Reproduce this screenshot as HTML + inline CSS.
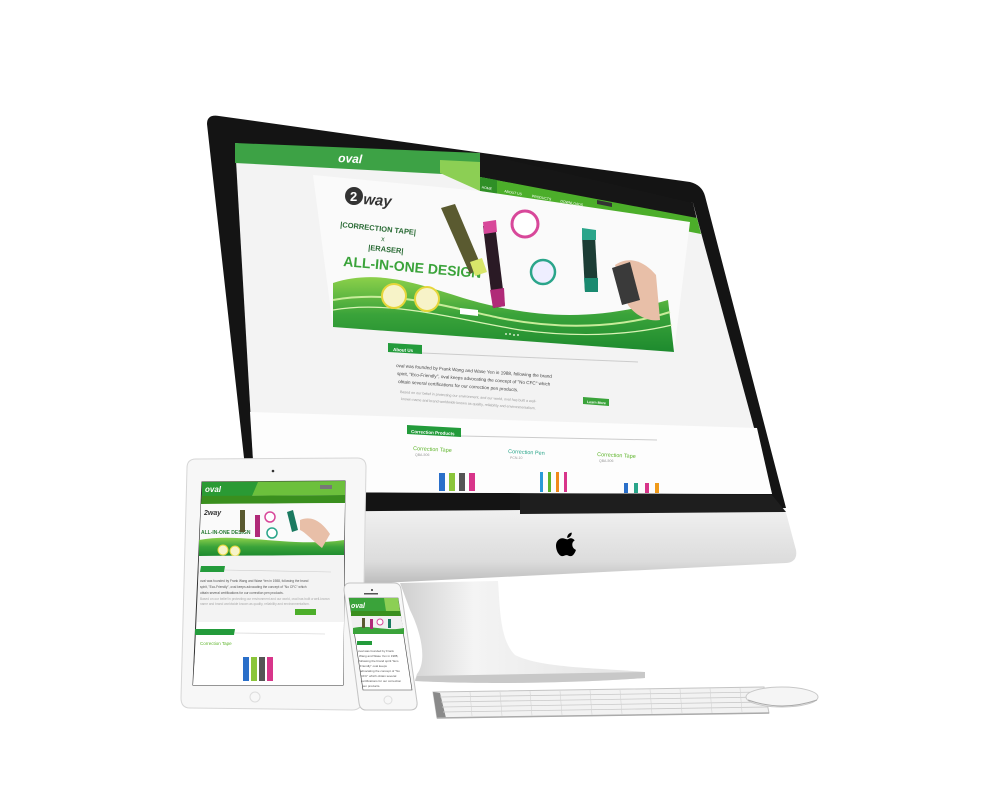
<!DOCTYPE html>
<html><head><meta charset="utf-8"><style>
html,body{margin:0;padding:0;background:#fff;width:1000px;height:800px;overflow:hidden}
svg{display:block}
text{font-family:"Liberation Sans",sans-serif}
</style></head><body>
<svg width="1000" height="800" viewBox="0 0 1000 800" xmlns="http://www.w3.org/2000/svg">
<defs>
<linearGradient id="chin" x1="0" y1="0" x2="0" y2="1"><stop offset="0" stop-color="#f2f2f2"/><stop offset="0.7" stop-color="#dcdcdc"/><stop offset="1" stop-color="#b8b8b8"/></linearGradient>
<linearGradient id="stand" x1="0" y1="0" x2="1" y2="0"><stop offset="0" stop-color="#cfcfcf"/><stop offset="0.3" stop-color="#f4f4f4"/><stop offset="1" stop-color="#e2e2e2"/></linearGradient>
<linearGradient id="grn" x1="0" y1="0" x2="0" y2="1"><stop offset="0" stop-color="#8cd04a"/><stop offset="0.5" stop-color="#3aa33a"/><stop offset="1" stop-color="#1d8a2e"/></linearGradient>
</defs>

<path d="M400,583 L498,581 C500,610 500,640 515,655 C540,668 600,668 645,672 L645,678 C560,684 470,684 415,680 L417,674 C428,660 420,630 410,610 Z" fill="url(#stand)"/>
<path d="M417,676 L645,672 L645,678 C560,684 470,684 415,681 Z" fill="#c8c8c8"/>
<path d="M250,505 L784,505 L796,550 Q798,562 786,563 L360,584 L255,586 Z" fill="url(#chin)"/>
<path d="M207,124 Q207,114 219,116 L690,182 Q702,185 705,196 L786,508 L250,512 Z" fill="#141414"/>
<path d="M520,493 L772,495 L786,512 L520,514 Z" fill="#1e1e1e"/>
<g transform="translate(556,532) scale(1.05)" fill="#000">
<path d="M11,7 C9,7 8,6 6,6 C3,6 0,9 0,13 C0,18 3,23 6,23 C7.5,23 8.5,22 10,22 C11.5,22 12,23 14,23 C16.5,23 18.5,19 19,17 C17,16 15.5,14.5 15.5,12 C15.5,10 16.5,8.8 17.8,8 C16.5,6.2 14.6,6 13.8,6 C12.5,6 11.8,7 11,7 Z"/>
<path d="M10.6,5.6 C10.5,3 12.5,0.8 15,0.6 C15.2,3.2 13,5.6 10.6,5.6 Z"/>
</g>

<polygon points="235,143 693,203 772,494 255,492" fill="#f3f3f3"/>
<polygon points="250,412 757,428 772,494 255,492" fill="#fdfdfd"/>
<polygon points="235,143 480,153 480,176 235,163" fill="#3da245"/>
<polygon points="440,160 480,162 480,191 440,173" fill="#8ccf54"/>
<polygon points="480,153 693,203 697,220 480,177" fill="#161616"/>
<polygon points="480,177 697,218 701,234 480,191" fill="#4cae2a"/>
<polygon points="480,177 497,180 497,194 480,191" fill="#2f8f26"/>
<text x="338" y="162" transform="rotate(3 338 162)" font-size="12" font-weight="bold" fill="#fff" font-style="italic">oval</text>
<g font-size="3.5" fill="#fff" transform="rotate(10 480 185)">
<text x="482" y="188">HOME</text><text x="505" y="188">ABOUT US</text><text x="533" y="188">PRODUCTS</text><text x="562" y="188">DOWNLOADS</text>
</g>
<polygon points="597,200 612,203 612,207 597,204" fill="#333"/>
<polygon points="313,175 480,191 690,222 674,352 333,327" fill="#fafafa"/>
<path d="M333,283 C380,268 420,285 470,300 C540,320 600,320 668,300 L674,352 L333,327 Z" fill="url(#grn)"/>
<path d="M333,300 C390,290 440,305 500,318 C560,330 620,328 670,312" stroke="#c8ec9a" stroke-width="2" fill="none"/>
<path d="M333,310 C390,300 450,318 520,330 C580,338 630,335 672,325" stroke="#d9f3b5" stroke-width="1.2" fill="none"/>
<circle cx="354" cy="196" r="9" fill="#333"/>
<text x="350" y="201" font-size="13" font-weight="bold" fill="#fff">2</text>
<text x="363" y="204" transform="rotate(5 363 204)" font-size="15" font-weight="bold" fill="#333" font-family="Liberation Serif" font-style="italic">way</text>
<text x="340" y="227" transform="rotate(6 340 227)" font-size="7.5" fill="#2a6b35" font-family="Liberation Mono" font-weight="bold">|CORRECTION TAPE|</text>
<text x="381" y="241" transform="rotate(6 381 241)" font-size="7" fill="#2a6b35">x</text>
<text x="368" y="250" transform="rotate(6 368 250)" font-size="7.5" fill="#2a6b35" font-family="Liberation Mono" font-weight="bold">|ERASER|</text>
<text x="343" y="266" transform="rotate(5 343 266)" font-size="14" font-weight="bold" fill="#3aa33a">ALL-IN-ONE DESIGN</text>
<circle cx="394" cy="296" r="12" fill="#f7f3c8" stroke="#e6d63a" stroke-width="2"/>
<circle cx="427" cy="299" r="12" fill="#f7f3c8" stroke="#e6d63a" stroke-width="2"/>
<polygon points="460,308 478,310 478,316 460,314" fill="#fff"/>
<polygon points="441,208 455,204 482,268 470,274" fill="#5a5a30"/>
<polygon points="470,262 482,258 487,272 475,276" fill="#d8e66a"/>
<polygon points="483,226 495,224 505,306 493,308" fill="#2a1a25"/>
<polygon points="483,222 496,220 497,232 484,234" fill="#d8489a"/>
<polygon points="490,290 504,288 505,306 493,308" fill="#b02a78"/>
<circle cx="525" cy="224" r="13" fill="#fff" stroke="#d8489a" stroke-width="3"/>
<circle cx="543" cy="272" r="12" fill="#eef" stroke="#2aa58a" stroke-width="2.5"/>
<polygon points="582,236 595,236 598,290 585,292" fill="#1c3d35"/>
<polygon points="582,228 596,230 596,240 582,240" fill="#2aa58a"/>
<polygon points="584,278 598,278 598,292 585,292" fill="#1a8a70"/>
<path d="M615,265 C630,255 645,262 656,275 L660,320 C648,322 635,315 628,305 Z" fill="#e8bfa8"/>
<polygon points="612,268 630,262 640,300 622,305" fill="#3a3a3a"/>
<g fill="#cfe9c6"><circle cx="506" cy="334" r="1"/><circle cx="510" cy="334" r="1"/><circle cx="514" cy="335" r="1"/><circle cx="518" cy="335" r="1"/></g>

<polygon points="388,343 422,345 422,354 388,352" fill="#239b3b"/>
<text x="393" y="351" transform="rotate(3 393 351)" font-size="4.5" fill="#fff" font-weight="bold">About Us</text>
<path d="M422,353 L638,362" stroke="#ccc" stroke-width="1"/>
<g font-size="4.6" fill="#444">
<text x="396" y="367" transform="rotate(4 396 367)">oval was founded by Frank Wang and Wase Yen in 1988, following the brand</text>
<text x="397" y="375" transform="rotate(4 397 375)">spirit, "Eco-Friendly", oval keeps advocating the concept of "No CFC" which</text>
<text x="398" y="383" transform="rotate(4 398 383)">obtain several certifications for our correction pen products.</text>
</g>
<g font-size="3.6" fill="#999">
<text x="400" y="393" transform="rotate(4 400 393)">Based on our belief in protecting our environment, and our world, oval has built a well-</text>
<text x="401" y="400" transform="rotate(4 401 400)">known name and brand worldwide known as quality, reliability and environmentalism.</text>
</g>
<polygon points="583,397 609,399 609,406 583,404" fill="#3aa33a"/>
<text x="587" y="403" transform="rotate(4 587 403)" font-size="3.5" fill="#fff" font-weight="bold">Learn More</text>

<polygon points="407,425 461,428 461,437 407,434" fill="#239b3b"/>
<text x="411" y="433" transform="rotate(3 411 433)" font-size="4.5" fill="#fff" font-weight="bold">Correction Products</text>
<path d="M461,436 L657,440" stroke="#ccc" stroke-width="1"/>
<g font-size="5.5" fill="#5fb52c">
<text x="413" y="450" transform="rotate(3 413 450)">Correction Tape</text>
<text x="508" y="453" transform="rotate(3 508 453)" fill="#2aa58a">Correction Pen</text>
<text x="597" y="456" transform="rotate(3 597 456)">Correction Tape</text>
</g>
<g font-size="3.5" fill="#999">
<text x="415" y="456">QBA-506</text><text x="510" y="459">PCN-10</text><text x="599" y="462">QBA-506</text>
</g>
<g>
<rect x="439" y="473" width="6" height="18" fill="#2a6fc9"/><rect x="449" y="473" width="6" height="18" fill="#8bc53a"/><rect x="459" y="473" width="6" height="18" fill="#555"/><rect x="469" y="473" width="6" height="18" fill="#d8358a"/>
<rect x="540" y="472" width="3" height="20" fill="#2a9ad8"/><rect x="548" y="472" width="3" height="20" fill="#5ab52c"/><rect x="556" y="472" width="3" height="20" fill="#f08a1a"/><rect x="564" y="472" width="3" height="20" fill="#d8358a"/>
<rect x="624" y="483" width="4" height="10" fill="#2a6fc9"/><rect x="634" y="483" width="4" height="10" fill="#2aa58a"/><rect x="645" y="483" width="4" height="10" fill="#d8358a"/><rect x="655" y="483" width="4" height="10" fill="#f09a1a"/>
</g>

<polygon points="433,692 764,687 769,713 437,718" fill="#f2f2f2" stroke="#c4c4c4" stroke-width="1"/>
<polygon points="433,692 437,718 446,718 440,693" fill="#8a8a8a"/>
<path d="M437,718 L769,713" stroke="#aaa" stroke-width="1.5"/>
<g stroke="#c9c9c9" stroke-width="0.8">
<line x1="440" y1="697" x2="765" y2="692"/><line x1="441" y1="702" x2="766" y2="697"/><line x1="442" y1="707" x2="767" y2="702"/><line x1="443" y1="712" x2="768" y2="707"/>
</g>
<g stroke="#d4d4d4" stroke-width="0.6">
<path d="M470,692 L472,716 M500,692 L502,716 M530,691 L532,716 M560,691 L562,715 M590,690 L592,715 M620,690 L622,714 M650,689 L652,714 M680,689 L682,713 M710,688 L712,713 M740,688 L742,712"/>
</g>
<ellipse cx="782" cy="697" rx="36" ry="10" fill="#f5f5f5" stroke="#c8c8c8"/>
<path d="M748,700 Q782,712 817,700" stroke="#aaa" fill="none"/>

<path d="M196,459 L357,458 Q366,458 366,467 L362,700 Q362,710 352,710 L190,708 Q181,708 181,698 L187,468 Q187,459 196,459 Z" fill="#f7f7f7" stroke="#d6d6d6"/>
<circle cx="273" cy="471" r="1.3" fill="#333"/>
<circle cx="255" cy="697" r="5" fill="none" stroke="#ddd"/>
<polygon points="202,482 345,481 343,685 193,685" fill="#f4f4f4" stroke="#333" stroke-width="1"/>
<polygon points="202,482 345,481 345,495 202,496" fill="#6cc03c"/>
<polygon points="202,482 258,482 252,496 202,496" fill="#2a9a34"/>
<text x="205" y="492" font-size="8" font-weight="bold" fill="#fff" font-style="italic">oval</text>
<rect x="320" y="485" width="12" height="4" fill="#777"/>
<polygon points="202,496 345,495 345,503 201,504" fill="#3a8f1e"/>
<polygon points="201,504 345,503 344,555 199,556" fill="#fafafa"/>
<path d="M199,540 C240,532 290,548 344,540 L344,555 L199,556 Z" fill="url(#grn)"/>
<circle cx="223" cy="550" r="5" fill="#f7f3c8" stroke="#e6d63a"/><circle cx="235" cy="551" r="5" fill="#f7f3c8" stroke="#e6d63a"/>
<text x="204" y="515" font-size="7" font-weight="bold" fill="#333" font-style="italic">2way</text>
<text x="201" y="534" font-size="5" font-weight="bold" fill="#2a7b35">ALL-IN-ONE DESIGN</text>
<rect x="240" y="510" width="5" height="22" fill="#5a5a30"/><rect x="255" y="515" width="5" height="22" fill="#b02a78"/><circle cx="270" cy="517" r="5" fill="#fff" stroke="#d8489a" stroke-width="1.5"/><circle cx="272" cy="533" r="5" fill="#fff" stroke="#2aa58a" stroke-width="1.5"/><polygon points="287,512 293,510 298,530 292,532" fill="#1a7a60"/><path d="M300,520 C312,515 322,522 330,534 L322,548 C312,540 305,532 300,530 Z" fill="#e8bfa8"/>
<polygon points="199,556 344,555 344,622 197,622" fill="#f3f3f3"/>
<polygon points="197,622 344,622 343,685 193,685" fill="#fff"/>
<polygon points="201,566 225,566 224,572 200,572" fill="#239b3b"/>
<path d="M225,570 L331,572" stroke="#ccc" stroke-width="0.6"/>
<g font-size="3.2" fill="#555">
<text x="200" y="582">oval was founded by Frank Wang and Wase Yen in 1988, following the brand</text>
<text x="200" y="588">spirit, "Eco-Friendly", oval keeps advocating the concept of "No CFC" which</text>
<text x="200" y="594">obtain several certifications for our correction pen products.</text>
<text x="200" y="600" fill="#aaa">Based on our belief in protecting our environment and our world, oval has built a well-known</text>
<text x="200" y="605" fill="#aaa">name and brand worldwide known as quality, reliability and environmentalism.</text>
</g>
<rect x="295" y="609" width="21" height="6" fill="#4cae2a"/>
<polygon points="195,629 235,629 234,635 195,635" fill="#239b3b"/>
<path d="M235,633 L325,634" stroke="#ccc" stroke-width="0.6"/>
<text x="200" y="645" font-size="4.5" fill="#5fb52c">Correction Tape</text>
<rect x="243" y="657" width="6" height="24" fill="#2a6fc9"/><rect x="251" y="657" width="6" height="24" fill="#8bc53a"/><rect x="259" y="657" width="6" height="24" fill="#555"/><rect x="267" y="657" width="6" height="24" fill="#d8358a"/>

<path d="M350,583 L394,583 Q400,583 401,589 L417,702 Q418,710 410,710 L366,710 Q360,710 359,703 L344,590 Q344,583 350,583 Z" fill="#f7f7f7" stroke="#c4c4c4"/>
<circle cx="372" cy="590" r="1" fill="#333"/>
<rect x="364" y="593" width="14" height="1.5" fill="#555"/>
<circle cx="388" cy="700" r="4" fill="none" stroke="#ddd"/>
<polygon points="349,598 398,598 412,690 363,690" fill="#fff" stroke="#444" stroke-width="0.6"/>
<polygon points="349,598 398,598 400,611 351,611" fill="#3aa33a"/>
<polygon points="384,598 398,598 400,611 386,611" fill="#8ccf54"/>
<text x="351" y="608" font-size="7" font-weight="bold" fill="#fff" font-style="italic">oval</text>
<polygon points="351,611 400,611 401,616 351,616" fill="#3a8f1e"/>
<polygon points="351,616 401,616 404,634 353,634" fill="#f0f0f0"/>
<path d="M353,628 C370,624 385,632 404,628 L404,634 L353,634 Z" fill="#3aa33a"/>
<rect x="362" y="618" width="3" height="10" fill="#5a5a30"/><rect x="370" y="619" width="3" height="10" fill="#b02a78"/><circle cx="380" cy="622" r="3" fill="#fff" stroke="#d8489a"/><rect x="388" y="619" width="3" height="9" fill="#1a7a60"/>
<polygon points="357,641 372,641 372,645 357,645" fill="#239b3b"/>
<g font-size="3" fill="#555">
<text x="358" y="652">oval was founded by Frank</text><text x="359" y="657">Wang and Wase Yen in 1988,</text><text x="359" y="662">following the brand spirit "Eco</text><text x="360" y="667">Friendly" oval keeps</text><text x="360" y="672">advocating the concept of "No</text><text x="361" y="677">CFC" which obtain several</text><text x="361" y="682">certifications for our correction</text><text x="362" y="687">pen products.</text>
</g>
</svg>
</body></html>
